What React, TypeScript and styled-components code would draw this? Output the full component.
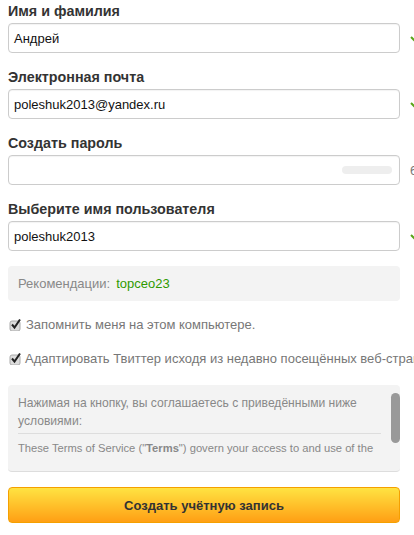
import React from "react";
import styled, { createGlobalStyle } from "styled-components";

const GlobalStyle = createGlobalStyle`
  html, body {
    margin: 0;
    padding: 0;
    background: #fff;
    overflow: hidden;
  }
  body {
    font-family: "Liberation Sans", Arial, sans-serif;
    color: #333;
  }
`;

const Page = styled.div`
  width: 414px;
  height: 535px;
  overflow: hidden;
  padding-left: 8px;
  box-sizing: border-box;
`;

const Field = styled.div`
  height: 66px;
  display: flex;
  flex-direction: column;
  justify-content: flex-end;
  padding-bottom: 13px;
  box-sizing: border-box;
`;

const Label = styled.label`
  font-size: 14.3px;
  font-weight: bold;
  line-height: 18px;
  margin-bottom: 3px;
  color: #333;
`;

const InputRow = styled.div`
  display: flex;
  align-items: center;
  width: 440px;
`;

const Input = styled.div`
  position: relative;
  width: 392px;
  height: 30px;
  box-sizing: border-box;
  flex: none;
  border: 1px solid #ccc;
  border-radius: 4px;
  background: #fff;
  box-shadow: inset 0 1px 1px rgba(0, 0, 0, 0.05);
  padding: 0 5px;
  font-size: 13px;
  line-height: 30px;
  color: #111;
`;

const Strength = styled.span`
  position: absolute;
  right: 7px;
  top: 10px;
  width: 50px;
  height: 8px;
  border-radius: 4px;
  background: #eee;
`;

const Check = styled.svg`
  flex: none;
  margin-left: 10px;
`;

const Hint = styled.span`
  margin-left: 10px;
  font-size: 13px;
  color: #777;
  white-space: nowrap;
`;

const Suggest = styled.div`
  width: 392px;
  height: 35px;
  box-sizing: border-box;
  margin-top: 2px;
  padding: 0 10px;
  border-radius: 4px;
  background: #f3f3f3;
  display: flex;
  align-items: center;
  gap: 6px;
  font-size: 13px;
  color: #888;
`;

const SuggestLink = styled.span`
  color: #2f9a00;
`;

const CheckRow = styled.div<{ $top: number; $gap: number }>`
  display: flex;
  align-items: center;
  gap: ${(p) => p.$gap}px;
  width: 440px;
  height: 16px;
  margin-top: ${(p) => p.$top}px;
  font-size: 13px;
  color: #777;
  white-space: nowrap;
`;

const Box = styled.svg`
  flex: none;
  margin-left: 1px;
`;

const Terms = styled.div`
  position: relative;
  width: 392px;
  height: 87px;
  box-sizing: border-box;
  margin-top: 19px;
  padding: 0 10px;
  border-radius: 4px;
  background: #f3f3f3;
  border-bottom: 1px solid #ddd;
  color: #888;
  overflow: hidden;
`;

const TermsIntro = styled.div`
  padding-top: 9px;
  padding-bottom: 3px;
  font-size: 12.1px;
  line-height: 18px;
  border-bottom: 1px solid #ddd;
  margin-right: 9px;
`;

const TermsBody = styled.div`
  margin-top: 5px;
  font-size: 11.2px;
  line-height: 18px;
  white-space: nowrap;
`;

const Thumb = styled.span`
  position: absolute;
  right: 0;
  top: 8px;
  width: 9px;
  height: 50px;
  border-radius: 5px;
  background: #999;
`;

const Submit = styled.button`
  display: block;
  width: 392px;
  height: 36px;
  margin: 15px 0 0;
  padding: 0;
  border: 1px solid #f5a000;
  border-radius: 4px;
  background: linear-gradient(#ffe342, #ff9f14);
  font-family: inherit;
  font-size: 13px;
  font-weight: bold;
  color: #333;
`;

const CheckMark = () => (
  <Check width="12" height="12" viewBox="0 0 12 12">
    <path d="M1 5l3 3 7-7" fill="none" stroke="#5aa51a" strokeWidth="2" />
  </Check>
);

const Tick = () => (
  <Box width="13" height="13" viewBox="0 0 13 13">
    <rect x="1" y="3" width="10" height="10" rx="2" fill="#ddd" stroke="#aaa" />
    <path d="M3 6.5l2.5 3L11 1.5" fill="none" stroke="#222" strokeWidth="2" />
  </Box>
);

export default function App() {
  return (
    <>
      <GlobalStyle />
      <Page>
        <Field>
          <Label>Имя и фамилия</Label>
          <InputRow>
            <Input>Андрей</Input>
            <CheckMark />
          </InputRow>
        </Field>
        <Field>
          <Label>Электронная почта</Label>
          <InputRow>
            <Input>poleshuk2013@yandex.ru</Input>
            <CheckMark />
          </InputRow>
        </Field>
        <Field>
          <Label>Создать пароль</Label>
          <InputRow>
            <Input>
              <Strength />
            </Input>
            <Hint>6 символов</Hint>
          </InputRow>
        </Field>
        <Field>
          <Label>Выберите имя пользователя</Label>
          <InputRow>
            <Input>poleshuk2013</Input>
            <CheckMark />
          </InputRow>
        </Field>
        <Suggest>
          Рекомендации: <SuggestLink>topceo23</SuggestLink>
        </Suggest>
        <CheckRow $top={15} $gap={4}>
          <Tick />
          Запомнить меня на этом компьютере.
        </CheckRow>
        <CheckRow $top={18} $gap={3}>
          <Tick />
          Адаптировать Твиттер исходя из недавно посещённых веб-страниц
        </CheckRow>
        <Terms>
          <TermsIntro>Нажимая на кнопку, вы соглашаетесь с приведёнными ниже условиями:</TermsIntro>
          <TermsBody>
            These Terms of Service ("<b>Terms</b>") govern your access to and use of the
          </TermsBody>
          <Thumb />
        </Terms>
        <Submit>Создать учётную запись</Submit>
      </Page>
    </>
  );
}
